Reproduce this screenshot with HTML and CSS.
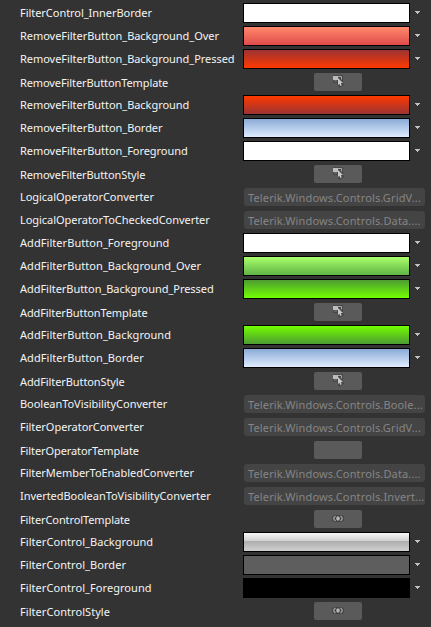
FILE: index.html
```html
<!DOCTYPE html>
<html lang="en">
<head>
<meta charset="utf-8">
<title>Resources</title>
<link rel="stylesheet" href="styles.css">
</head>
<body>
<svg class="defs" width="0" height="0">
<symbol id="template" viewBox="0 0 14 14">
<path d="M2 1h10v7l1 3-5 3-2-5H2z" fill="#474747"/>
<rect x="2" y="2" width="5" height="4" fill="#bdbdbd"/>
<path d="M7 2.5h3.5v3" fill="none" stroke="#aaa"/>
<path d="M3 7h3" stroke="#808080"/>
<path d="M7 4l5 5H9.9l.8 2.2-1.4.7-.9-2.2L7 11z" fill="#c8c8c8"/>
</symbol>
<symbol id="style" viewBox="0 0 14 14">
<rect x="1" y="4" width="12" height="7" rx="3" fill="#444"/>
<path d="M4.5 5Q1 7.5 4.5 10M9.5 5Q13 7.5 9.5 10" fill="none" stroke="#a8a8a8" stroke-width="1.3"/>
<circle cx="7" cy="7.5" r="2" fill="#a0a0a0"/>
<path d="M7 5.5v4" stroke="#ccc"/>
</symbol>
<symbol id="arrow" viewBox="0 0 5 3"><path d="M0 0h5v1H4v1H3v1H2V2H1V1H0z" fill="#c0c0c0"/></symbol>
</svg>
<main class="list">
<div class="row"><span class="label">FilterControl_InnerBorder</span><span class="swatch white"></span><svg class="arrow"><use href="#arrow"/></svg></div>
<div class="row"><span class="label">RemoveFilterButton_Background_Over</span><span class="swatch red-over"></span><svg class="arrow"><use href="#arrow"/></svg></div>
<div class="row"><span class="label">RemoveFilterButton_Background_Pressed</span><span class="swatch red-pressed"></span><svg class="arrow"><use href="#arrow"/></svg></div>
<div class="row action"><span class="label">RemoveFilterButtonTemplate</span><span class="button"><svg class="icon"><use href="#template"/></svg></span></div>
<div class="row"><span class="label">RemoveFilterButton_Background</span><span class="swatch red"></span><svg class="arrow"><use href="#arrow"/></svg></div>
<div class="row"><span class="label">RemoveFilterButton_Border</span><span class="swatch blue"></span><svg class="arrow"><use href="#arrow"/></svg></div>
<div class="row"><span class="label">RemoveFilterButton_Foreground</span><span class="swatch white"></span><svg class="arrow"><use href="#arrow"/></svg></div>
<div class="row action"><span class="label">RemoveFilterButtonStyle</span><span class="button"><svg class="icon"><use href="#template"/></svg></span></div>
<div class="row"><span class="label">LogicalOperatorConverter</span><span class="value">Telerik.Windows.Controls.GridV...</span></div>
<div class="row"><span class="label">LogicalOperatorToCheckedConverter</span><span class="value">Telerik.Windows.Controls.Data....</span></div>
<div class="row"><span class="label wide">AddFilterButton_Foreground</span><span class="swatch white"></span><svg class="arrow"><use href="#arrow"/></svg></div>
<div class="row"><span class="label wide">AddFilterButton_Background_Over</span><span class="swatch green-over"></span><svg class="arrow"><use href="#arrow"/></svg></div>
<div class="row"><span class="label">AddFilterButton_Background_Pressed</span><span class="swatch green-pressed"></span><svg class="arrow"><use href="#arrow"/></svg></div>
<div class="row action"><span class="label">AddFilterButtonTemplate</span><span class="button"><svg class="icon"><use href="#template"/></svg></span></div>
<div class="row"><span class="label wide">AddFilterButton_Background</span><span class="swatch green"></span><svg class="arrow"><use href="#arrow"/></svg></div>
<div class="row"><span class="label wide">AddFilterButton_Border</span><span class="swatch blue"></span><svg class="arrow"><use href="#arrow"/></svg></div>
<div class="row action"><span class="label">AddFilterButtonStyle</span><span class="button"><svg class="icon"><use href="#template"/></svg></span></div>
<div class="row"><span class="label">BooleanToVisibilityConverter</span><span class="value">Telerik.Windows.Controls.Boole...</span></div>
<div class="row"><span class="label">FilterOperatorConverter</span><span class="value">Telerik.Windows.Controls.GridV...</span></div>
<div class="row action"><span class="label">FilterOperatorTemplate</span><span class="button"></span></div>
<div class="row"><span class="label">FilterMemberToEnabledConverter</span><span class="value">Telerik.Windows.Controls.Data....</span></div>
<div class="row"><span class="label">InvertedBooleanToVisibilityConverter</span><span class="value">Telerik.Windows.Controls.Invert...</span></div>
<div class="row action"><span class="label">FilterControlTemplate</span><span class="button"><svg class="icon"><use href="#style"/></svg></span></div>
<div class="row"><span class="label wide">FilterControl_Background</span><span class="swatch silver"></span><svg class="arrow"><use href="#arrow"/></svg></div>
<div class="row"><span class="label wide">FilterControl_Border</span><span class="swatch gray"></span><svg class="arrow"><use href="#arrow"/></svg></div>
<div class="row"><span class="label wide">FilterControl_Foreground</span><span class="swatch black"></span><svg class="arrow"><use href="#arrow"/></svg></div>
<div class="row action"><span class="label wide">FilterControlStyle</span><span class="button"><svg class="icon"><use href="#style"/></svg></span></div>
</main>
</body>
</html>
```
FILE: styles.css
```css
* { box-sizing: border-box; }
body { margin: 0; height: 627px; overflow: hidden; background: #333; font-family: "Noto Sans", "Open Sans", sans-serif; font-size: 11px; }
.defs { display: none; }
.list { padding: 2px 0 0 20px; }
.row { display: flex; align-items: flex-start; height: 23px; }
.label { width: 223px; flex: none; padding-top: 3px; line-height: 16px; color: #f4f4f4; letter-spacing: -.04px; white-space: nowrap; }
.action .label { padding-top: 4px; letter-spacing: -.1px; }
.label.wide { letter-spacing: .06px; }
.swatch { width: 167px; height: 20px; margin-top: 1px; border: 1px solid #000; flex: none; }
.arrow { width: 5px; height: 3px; margin: 9px 0 0 5px; flex: none; }
.button { width: 48px; height: 18px; margin: 2px 0 0 71px; border-radius: 2px; background: #5a5a5a; display: flex; justify-content: center; }
.icon { width: 14px; height: 14px; margin-top: 1px; }
.value { width: 181px; height: 18px; margin: 2px 0 0 1px; padding-left: 4px; border-radius: 3px; background: #444; color: #858585; line-height: 19px; letter-spacing: .14px; white-space: nowrap; overflow: hidden; }
.white { background: #fff; }
.red-over { background: linear-gradient(#ff886b, #df4b4b); }
.red-pressed { background: linear-gradient(#9b3333, #ff3900); }
.red { background: linear-gradient(#ff3900, #9b3333); }
.blue { background: linear-gradient(#8aaad6, #e0edff); }
.green-over { background: linear-gradient(#aaff6b, #5fb446); }
.green-pressed { background: linear-gradient(#4c9b33, #73ff00); }
.green { background: linear-gradient(#73ff00, #4c9b33); }
.silver { background: linear-gradient(#f8f8f8, #d0d0d0 43%, #acacac 44%, #cfcfcf); }
.gray { background: #5e5e5e; }
.black { background: #000; }
```
